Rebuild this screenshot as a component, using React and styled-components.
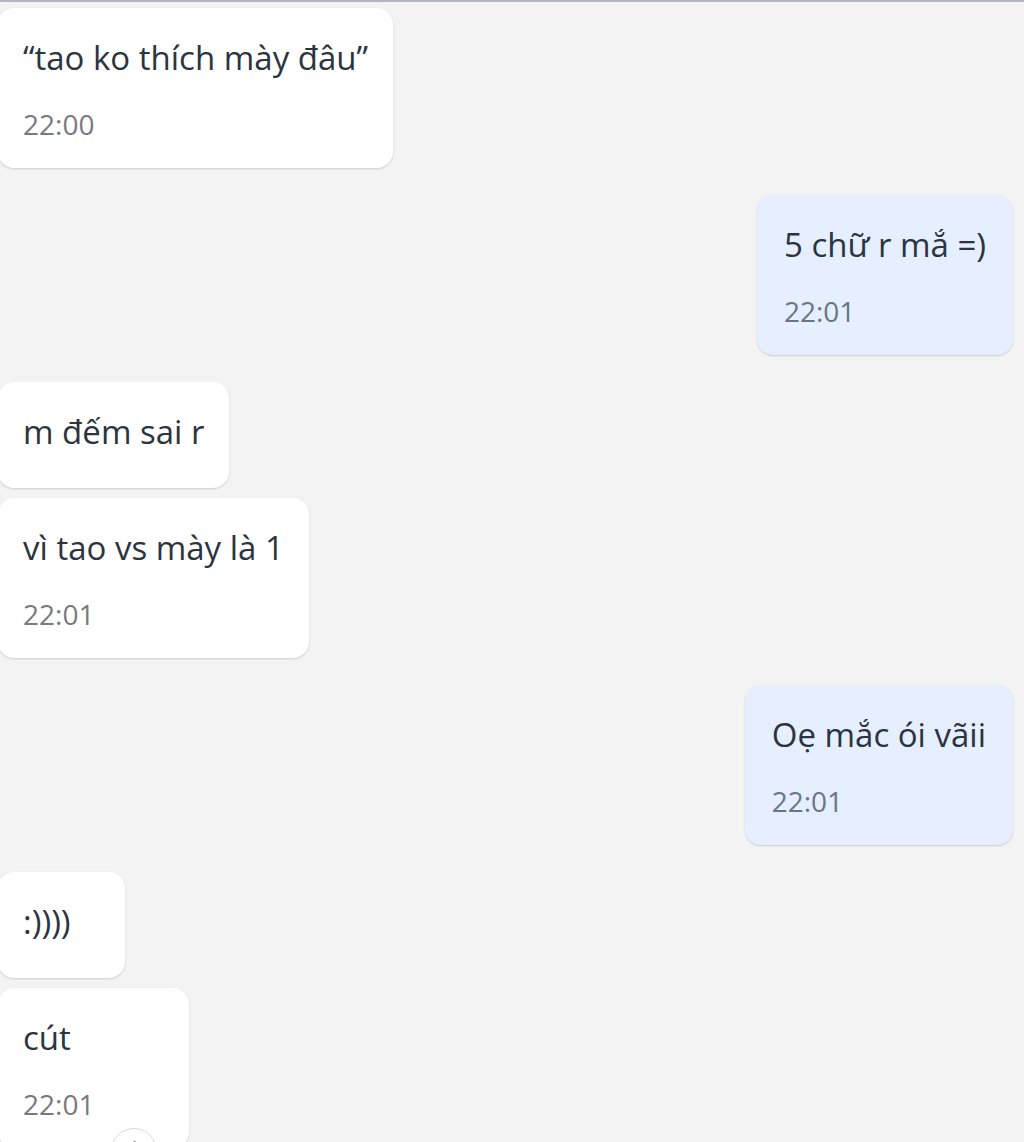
import React from "react";
import styled, { createGlobalStyle } from "styled-components";
import { ThumbsUp } from "lucide-react";

const Global = createGlobalStyle`
  html, body { margin: 0; padding: 0; background: #f3f3f3; overflow: hidden; }
  body { font-family: "Open Sans", "Noto Sans", sans-serif; }
`;

const Screen = styled.div`
  width: 1024px;
  height: 1142px;
  overflow: hidden;
  background: #f3f3f3;
  border-top: 2px solid #b3b6c2;
  box-sizing: border-box;
`;

const Thread = styled.div`
  display: flex;
  flex-direction: column;
  padding: 6px 11px 0 0;
`;

const Row = styled.div`
  display: flex;
  justify-content: ${(p) => (p.$mine ? "flex-end" : "flex-start")};
  margin-top: ${(p) => (p.$first ? "0" : p.$newGroup ? "27px" : "10px")};
`;

const Bubble = styled.div`
  position: relative;
  box-sizing: border-box;
  background: ${(p) => (p.$mine ? "#e5efff" : "#ffffff")};
  border-radius: 16px;
  box-shadow: 0 1px 2px rgba(0, 0, 0, 0.16);
  padding: ${(p) => (p.$mine ? "30px 27px 24px 27px" : "30px 25px 24px 25px")};
  margin-left: ${(p) => (p.$mine ? "0" : "-2px")};
  min-width: ${(p) => (p.$hasTime ? "191px" : "127px")};
  height: ${(p) => (p.$hasTime ? "160px" : "106px")};
`;

const Text = styled.div`
  font-size: 33px;
  line-height: 40px;
  color: #2c3440;
  white-space: nowrap;
`;

const Time = styled.div`
  margin-top: 26px;
  font-size: 28px;
  line-height: 40px;
  color: ${(p) => (p.$mine ? "#6b7685" : "#777a7f")};
`;

const ReactionButton = styled.div`
  position: absolute;
  right: 32px;
  bottom: -26px;
  width: 46px;
  height: 46px;
  border-radius: 50%;
  background: #ffffff;
  border: 1px solid #d6d9de;
  box-sizing: border-box;
  display: flex;
  align-items: center;
  justify-content: center;
  color: #7b8089;
`;

const messages = [
  { text: "“tao ko thích mày đâu”", time: "22:00" },
  { text: "5 chữ r mắ =)", time: "22:01", mine: true },
  { text: "m đếm sai r" },
  { text: "vì tao vs mày là 1", time: "22:01" },
  { text: "Oẹ mắc ói vãii", time: "22:01", mine: true },
  { text: ":))))" },
  { text: "cút", time: "22:01", reaction: true },
];

export default function App() {
  return (
    <>
      <Global />
      <Screen>
        <Thread>
          {messages.map((m, i) => {
            const prev = messages[i - 1];
            const newGroup = prev && !!prev.mine !== !!m.mine;
            return (
              <Row key={i} $mine={m.mine} $first={i === 0} $newGroup={newGroup}>
                <Bubble $mine={m.mine} $hasTime={!!m.time}>
                  <Text>{m.text}</Text>
                  {m.time && <Time $mine={m.mine}>{m.time}</Time>}
                  {m.reaction && (
                    <ReactionButton>
                      <ThumbsUp size={22} strokeWidth={1.6} />
                    </ReactionButton>
                  )}
                </Bubble>
              </Row>
            );
          })}
        </Thread>
      </Screen>
    </>
  );
}
